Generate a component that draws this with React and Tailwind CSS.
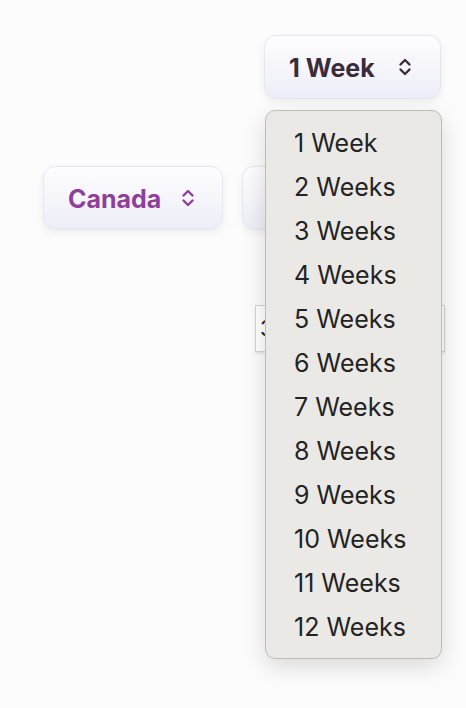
import React from "react";

const Chevrons = ({ className }) => (
  <svg viewBox="0 0 14 20" className={className} fill="none" stroke="currentColor" strokeWidth="2.4" strokeLinecap="round" strokeLinejoin="round">
    <path d="M2.5 7.5L7 3l4.5 4.5" />
    <path d="M2.5 12.5L7 17l4.5-4.5" />
  </svg>
);

const weeks = [
  "1 Week", "2 Weeks", "3 Weeks", "4 Weeks", "5 Weeks", "6 Weeks",
  "7 Weeks", "8 Weeks", "9 Weeks", "10 Weeks", "11 Weeks", "12 Weeks",
];

const SelectButton = ({ label, color, width, pr }) => (
  <div
    className={`${width} ${pr} h-[64px] flex items-center justify-between pl-[24px] rounded-[12px] border border-[#e6e6ef] bg-gradient-to-b from-[#fefeff] to-[#ededf7] shadow-[0_3px_8px_rgba(0,0,0,0.06)] font-bold text-[25px] ${color}`}
  >
    <span className="pt-[3px]">{label}</span>
    <Chevrons className="w-[14px] h-[20px]" />
  </div>
);

export default function App() {
  return (
    <div className="relative min-h-[708px] bg-[#fcfcfc] overflow-hidden" style={{ fontFamily: "Inter, 'Noto Sans', sans-serif" }}>
      <div className="pt-[35px] pl-[264px]">
        <SelectButton label="1 Week" color="text-[#3b2b3b]" width="w-[177px]" pr="pr-[28px]" />
      </div>

      <div className="mt-[67px] pl-[43px] flex gap-[19px]">
        <SelectButton label="Canada" color="text-[#8e3f9b]" width="w-[180px]" pr="pr-[27px]" />
        <SelectButton label="" color="text-[#3b2b3b]" width="w-[180px]" pr="pr-[28px]" />
      </div>

      <div className="mt-[75px] pl-[255px]">
        <div className="w-[190px] h-[47px] flex items-center pl-[4px] bg-white border border-[#d4d4d4] shadow-[0_2px_2px_rgba(0,0,0,0.08)] text-[22px] text-[#222]">
          3
        </div>
      </div>

      {/* open menu */}
      <div className="absolute top-[110px] left-[265px] w-[177px] pt-[11px] pb-[8px] rounded-[10px] bg-[#ebe9e6] border border-[#bdbcba] shadow-[0_8px_24px_rgba(0,0,0,0.14)]">
        {weeks.map((w) => (
          <div key={w} className="h-[44px] flex items-center pl-[28px] text-[25px] text-[#232323]">
            {w}
          </div>
        ))}
      </div>
    </div>
  );
}
